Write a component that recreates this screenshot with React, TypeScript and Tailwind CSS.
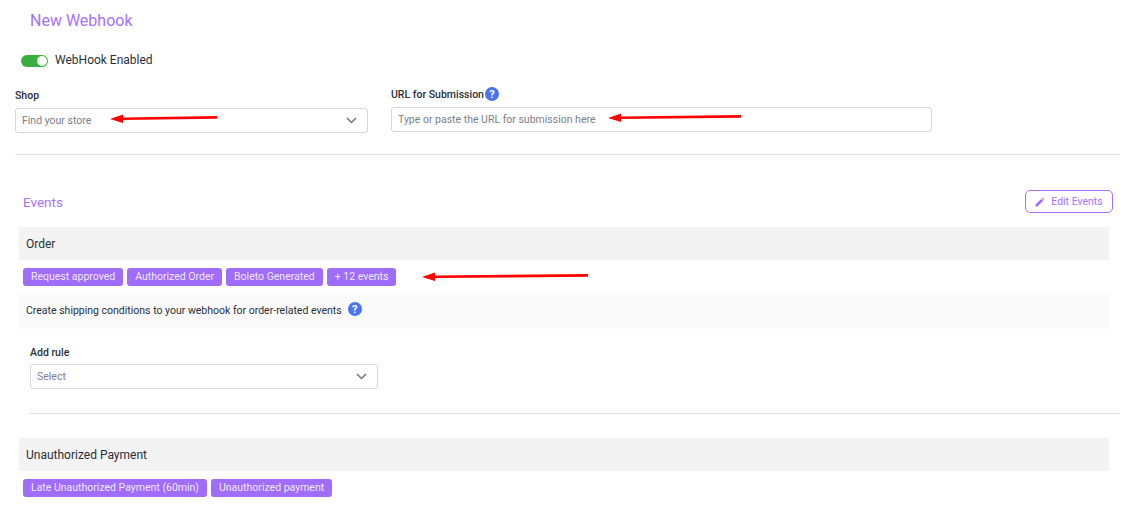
import React from 'react';

const ChevronIcon = () => (
  <svg width="11" height="7" viewBox="0 0 11 7" fill="none" className="shrink-0">
    <path d="M1 1L5.5 5.5L10 1" stroke="#6f7682" strokeWidth="1.5" />
  </svg>
);

const HelpIcon = ({ className = '' }: { className?: string }) => (
  <span className={`flex h-[14px] w-[14px] shrink-0 items-center justify-center rounded-full bg-[#4a74f5] text-[11px] font-bold leading-none text-white ${className}`}>
    ?
  </span>
);

const PencilIcon = () => (
  <svg width="10" height="10" viewBox="0 0 10 10" className="shrink-0">
    <path d="M0.5 9.5V7.6L6.2 1.9L8.1 3.8L2.4 9.5Z M6.9 1.2L7.7 0.5L9.5 2.3L8.8 3.1Z" fill="#a06cfa" />
  </svg>
);

// hand drawn annotation arrows, these sit on top of the form
const Arrow = ({ className, width }: { className: string; width: number }) => (
  <svg width={width} height="10" viewBox={`0 0 ${width} 10`} className={`pointer-events-none absolute ${className}`}>
    <path d={`M0 6L13 1.5V4.5L${width} 3V5.8L13 7V10Z`} fill="#ff0000" />
  </svg>
);

const Chip = ({ label }: { label: string }) => (
  <span className="flex h-[18px] items-center rounded-[3px] bg-[#a06cfa] px-2 text-[10.5px] text-[#f1e9ff]">
    {label}
  </span>
);

const SelectBox = ({ placeholder, className }: { placeholder: string; className: string }) => (
  <div className={`flex h-[25px] items-center justify-between rounded-[3px] border border-[#d3d6e0] bg-white pl-[6px] pr-[10px] ${className}`}>
    <span className="text-[10.5px] text-[#7c8087]">{placeholder}</span>
    <ChevronIcon />
  </div>
);

const App = () => {
  return (
    <div className="relative h-[508px] w-[1136px] overflow-hidden bg-white font-['Roboto',sans-serif] text-[#2b2f36]">
      <h1 className="pl-[30px] pt-[11px] text-[16px] leading-[19px] text-[#a672fb]">New Webhook</h1>

      <div className="ml-[21px] mt-[23px] flex items-center gap-[7px]">
        <div className="flex h-[12px] w-[27px] items-center justify-end rounded-full bg-[#38b03f] pr-px">
          <div className="h-[10px] w-[10px] rounded-full bg-white" />
        </div>
        <span className="pb-[2px] text-[12px] leading-[14px]">WebHook Enabled</span>
      </div>

      <div className="ml-[15px] mt-[18px] flex items-start gap-[23px]">
        <div className="relative w-[353px] pt-[2px]">
          <label className="block text-[10.5px] font-medium leading-[13px]">Shop</label>
          <SelectBox placeholder="Find your store" className="mt-[6px] w-full" />
          <Arrow width={107} className="left-[95px] top-[26px]" />
        </div>
        <div className="relative w-[541px]">
          <div className="flex items-center gap-px">
            <label className="text-[10.5px] font-medium leading-[13px]">URL for Submission</label>
            <HelpIcon />
          </div>
          <div className="mt-[6px] flex h-[25px] items-center rounded-[3px] border border-[#d3d6e0] pl-[6px]">
            <span className="text-[10.5px] text-[#7c8087]">Type or paste the URL for submission here</span>
          </div>
          <Arrow width={133} className="left-[217px] top-[25px]" />
        </div>
      </div>

      <hr className="ml-[15px] mt-[21px] w-[1105px] border-[#dfe0e4]" />

      <div className="ml-[19px] mt-[35px] w-[1094px]">
        <div className="flex items-center justify-between">
          <h2 className="pl-[4px] pt-[2px] text-[13.5px] text-[#a672fb]">Events</h2>
          <button className="flex h-[23px] w-[88px] items-center justify-center gap-[6px] rounded-[5px] border border-[#a672fb] text-[10.5px] text-[#a672fb]">
            <PencilIcon />
            Edit Events
          </button>
        </div>

        <div className="mt-[14px] flex h-[33px] w-[1090px] items-center bg-[#f3f3f3] pl-[7px] text-[12px]">Order</div>
        <div className="relative flex gap-[4px] pl-[4px] pt-[8px]">
          <Chip label="Request approved" />
          <Chip label="Authorized Order" />
          <Chip label="Boleto Generated" />
          <Chip label="+ 12 events" />
          <Arrow width={166} className="left-[403px] top-[11px]" />
        </div>
        <div className="mt-[7px] flex h-[36px] w-[1090px] items-center gap-[6px] bg-[#fafafa] pl-[7px] text-[10.5px]">
          Create shipping conditions to your webhook for order-related events
          <HelpIcon className="mb-[4px]" />
        </div>

        <div className="ml-[11px] mt-[17px] w-[348px]">
          <label className="block text-[10.5px] font-medium leading-[13px]">Add rule</label>
          <SelectBox placeholder="Select" className="mt-[5px] w-full" />
        </div>
      </div>

      <hr className="ml-[30px] mt-[24px] w-[1090px] border-[#dfe0e4]" />

      <div className="ml-[19px] mt-[24px] w-[1090px]">
        <div className="flex h-[33px] items-center bg-[#f3f3f3] pl-[7px] text-[12px]">Unauthorized Payment</div>
        <div className="flex gap-[4px] pl-[4px] pt-[8px]">
          <Chip label="Late Unauthorized Payment (60min)" />
          <Chip label="Unauthorized payment" />
        </div>
      </div>
    </div>
  );
};

export default App;
